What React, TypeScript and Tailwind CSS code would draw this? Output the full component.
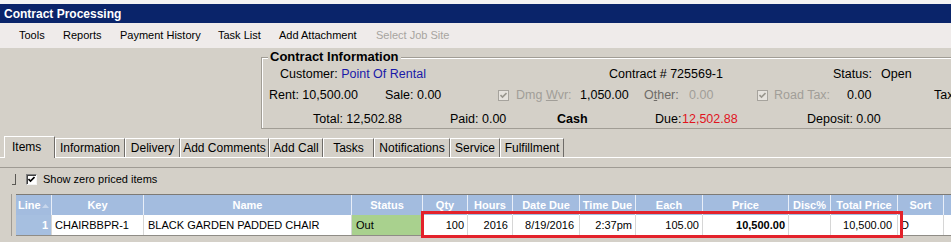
import { type FC, type ReactNode } from "react";

const MENU: { label: string; w: string; disabled?: boolean }[] = [
  { label: "Tools", w: "w-[44px]" },
  { label: "Reports", w: "w-[57px]" },
  { label: "Payment History", w: "w-[98px]" },
  { label: "Task List", w: "w-[61px]" },
  { label: "Add Attachment", w: "w-[97px]" },
  { label: "Select Job Site", w: "w-[97px]", disabled: true },
];

const TABS: { label: string; w: string }[] = [
  { label: "Information", w: "w-[70px]" },
  { label: "Delivery", w: "w-[55px]" },
  { label: "Add Comments", w: "w-[89px]" },
  { label: "Add Call", w: "w-[54px]" },
  { label: "Tasks", w: "w-[51px]" },
  { label: "Notifications", w: "w-[76px]" },
  { label: "Service", w: "w-[50px]" },
  { label: "Fulfillment", w: "w-[64px]" },
];

type Col = {
  key: string;
  w: string;
  value: string;
  align: string;
  cell?: string;
};

const COLS: Col[] = [
  { key: "Line", w: "w-[36px]", value: "1", align: "justify-end pr-[3px] font-bold text-white", cell: "bg-[#a6bfe0]" },
  { key: "Key", w: "w-[92px]", value: "CHAIRBBPR-1", align: "justify-start pl-[3px]" },
  { key: "Name", w: "w-[208px]", value: "BLACK GARDEN PADDED CHAIR", align: "justify-start pl-[4px]" },
  { key: "Status", w: "w-[71px]", value: "Out", align: "justify-start pl-[4px]", cell: "bg-[#a9d18e]" },
  { key: "Qty", w: "w-[45px]", value: "100", align: "justify-end pr-[3px]" },
  { key: "Hours", w: "w-[45px]", value: "2016", align: "justify-end pr-[4px]" },
  { key: "Date Due", w: "w-[67px]", value: "8/19/2016", align: "justify-end pr-[5px]" },
  { key: "Time Due", w: "w-[56px]", value: "2:37pm", align: "justify-end pr-[3px]" },
  { key: "Each", w: "w-[67px]", value: "105.00", align: "justify-end pr-[3px]" },
  { key: "Price", w: "w-[86px]", value: "10,500.00", align: "justify-end pr-[3px] font-bold" },
  { key: "Disc%", w: "w-[42px]", value: "", align: "justify-end pr-[3px]" },
  { key: "Total Price", w: "w-[67px]", value: "10,500.00", align: "justify-end pr-[5px]" },
  { key: "Sort", w: "w-[46px]", value: "D", align: "justify-start pl-[3px]" },
];

const CheckBox: FC<{ disabled?: boolean }> = ({ disabled }) => (
  <span
    className={`inline-flex h-[11px] w-[11px] items-center justify-center border ${
      disabled
        ? "border-[#a6a39d] bg-[#e6e3de]"
        : "border-t-[#808080] border-l-[#808080] border-r-[#f4f4f4] border-b-[#f4f4f4] bg-white shadow-[inset_1px_1px_0_#404040]"
    }`}
  >
    <svg width="7" height="7" viewBox="0 0 7 7">
      <path
        d="M0.5 3 L2.5 5 L6.5 1"
        fill="none"
        stroke={disabled ? "#9a978f" : "#000"}
        strokeWidth="1.6"
      />
    </svg>
  </span>
);

const Cell: FC<{ w: string; children?: ReactNode; className?: string }> = ({
  w,
  children,
  className = "",
}) => <span className={`${w} shrink-0 whitespace-nowrap ${className}`}>{children}</span>;

export default function App() {
  return (
    <div
      className="relative h-[242px] w-[951px] overflow-hidden bg-[#d4d0c8] text-black"
      style={{ fontFamily: '"Liberation Sans", Arial, sans-serif' }}
    >
      <div className="h-[4px] bg-[#f3f3f3]" />
      <div className="flex h-[19px] items-center bg-[#0a246a] pl-[4px] text-[12px] font-bold text-white">
        Contract Processing
      </div>

      {/* menu */}
      <div className="flex h-[25px] items-center bg-[#efebea] pl-[19px] text-[11px]">
        {MENU.map((item) => (
          <span
            key={item.label}
            className={`${item.w} shrink-0 whitespace-nowrap ${
              item.disabled ? "text-[#a7a4a0]" : "text-black"
            }`}
          >
            {item.label}
          </span>
        ))}
      </div>

      {/* contract information */}
      <div className="flex pt-[9px]">
        <div className="w-[261px] shrink-0" />
        <div className="h-[72px] flex-1 border border-r-0 border-[#a19d95] shadow-[inset_1px_1px_0_#fff] text-[12.5px]">
          <div className="-mt-[9px] ml-[6px] w-fit bg-[#d4d0c8] px-[2px] text-[13px] font-bold leading-[16px]">
            Contract Information
          </div>
          <div className="flex h-[18px] items-center pl-[18px]">
            <Cell w="w-[329px]">
              Customer: <span className="text-[#1a1aa8]">Point Of Rental</span>
            </Cell>
            <Cell w="w-[224px]">Contract # 725569-1</Cell>
            <Cell w="w-[48px]">Status:</Cell>
            <Cell w="w-[40px]">Open</Cell>
          </div>
          <div className="mt-[3px] flex h-[18px] items-center pl-[7px]">
            <Cell w="w-[116px]">Rent: 10,500.00</Cell>
            <Cell w="w-[113px]">Sale: 0.00</Cell>
            <Cell w="w-[18px]" className="flex items-center">
              <CheckBox disabled />
            </Cell>
            <Cell w="w-[64px]" className="text-[#a19e98]">
              Dmg <span className="underline">W</span>vr:
            </Cell>
            <Cell w="w-[64px]">1,050.00</Cell>
            <Cell w="w-[45px]" className="text-[#6f6c68]">
              O<span className="underline">t</span>her:
            </Cell>
            <Cell w="w-[68px]" className="text-[#a19e98]">0.00</Cell>
            <Cell w="w-[17px]" className="flex items-center">
              <CheckBox disabled />
            </Cell>
            <Cell w="w-[73px]" className="text-[#a19e98]">Road Tax:</Cell>
            <Cell w="w-[87px]">0.00</Cell>
            <Cell w="w-[30px]">Tax:</Cell>
          </div>
          <div className="mt-[6px] flex h-[18px] items-center pl-[51px]">
            <Cell w="w-[137px]">Total: 12,502.88</Cell>
            <Cell w="w-[107px]">Paid: 0.00</Cell>
            <Cell w="w-[98px]" className="font-bold">Cash</Cell>
            <Cell w="w-[27px]">Due:</Cell>
            <Cell w="w-[125px]" className="text-[#e0141e]">12,502.88</Cell>
            <Cell w="w-[100px]">Deposit: 0.00</Cell>
          </div>
        </div>
      </div>

      {/* tabs */}
      <div className="relative z-10 mt-[7px] flex h-[21px] items-end pl-[4px] text-[12px]">
        <div className="-mb-px flex h-[22px] w-[51px] shrink-0 items-center border-t border-l border-white border-r border-r-[#6f6c68] bg-[#d4d0c8] pb-px pl-[7px]">
          Items
        </div>
        {TABS.map((tab) => (
          <div
            key={tab.label}
            className={`${tab.w} flex h-[19px] shrink-0 items-center justify-center whitespace-nowrap border-t border-l border-white border-r border-r-[#6f6c68]`}
          >
            {tab.label}
          </div>
        ))}
      </div>

      {/* tab page */}
      <div className="h-[11px] border-t border-white border-b border-b-[#9f9b94]" />
      <div className="flex h-[26px] items-center pb-[4px] pl-[12px] text-[11px]">
        <span className="mr-[10px] h-[11px] w-[4px] border-r border-b border-[#5a5854]" />
        <CheckBox />
        <span className="ml-[6px]">Show zero priced items</span>
      </div>

      {/* grid */}
      <div className="ml-[11px] border-l border-[#9f9b94] pl-[4px]">
        <div className="flex h-[21px] border-t border-[#7d7a75] bg-[#a3bcdf] text-[11px] font-bold text-white">
          {COLS.map((c) => (
            <span
              key={c.key}
              className={`${c.w} flex shrink-0 items-center border-r border-[#e8eef8] ${
                c.key === "Line" ? "justify-start pl-[2px]" : "justify-center"
              }`}
            >
              {c.key}
              {c.key === "Line" && (
                <svg width="7" height="5" viewBox="0 0 7 5" className="ml-[1px]">
                  <path d="M0 5 L3.5 1 L7 5 Z" fill="#c7d6ec" />
                </svg>
              )}
            </span>
          ))}
          <span className="flex-1" />
        </div>
        <div className="flex h-[21px] border-b border-[#8f8c86] bg-white text-[11px]">
          {COLS.map((c) => (
            <span
              key={c.key}
              className={`${c.w} ${c.align} ${c.cell ?? ""} flex shrink-0 items-center whitespace-nowrap border-r border-[#d6d6d6]`}
            >
              {c.value}
            </span>
          ))}
          <span className="flex-1" />
        </div>
      </div>

      {/* highlight */}
      <div className="absolute left-[421px] top-[211px] h-[27px] w-[482px] border-[3px] border-[#e3222b]" />
    </div>
  );
}
